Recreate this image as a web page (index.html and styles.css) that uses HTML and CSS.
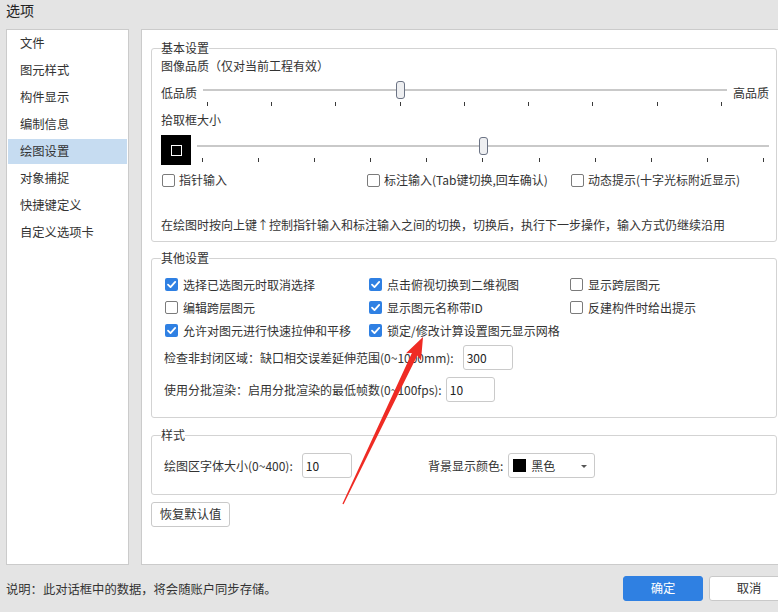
FILE: index.html
```html
<!DOCTYPE html>
<html lang="zh-CN">
<head>
<meta charset="utf-8">
<title>选项</title>
<link rel="stylesheet" href="styles.css">
</head>
<body>
<div class="dialog">
  <div class="titlebar">选项</div>
  <div class="main">
    <div class="nav">
      <div class="nav-item">文件</div>
      <div class="nav-item">图元样式</div>
      <div class="nav-item">构件显示</div>
      <div class="nav-item">编制信息</div>
      <div class="nav-item active">绘图设置</div>
      <div class="nav-item">对象捕捉</div>
      <div class="nav-item">快捷键定义</div>
      <div class="nav-item">自定义选项卡</div>
    </div>
    <div class="content">
      <fieldset class="group g-basic">
        <legend>基本设置</legend>
        <div class="line">图像品质（仅对当前工程有效）</div>
        <div class="slider-row">
          <span class="slabel">低品质</span>
          <div class="slider q">
            <div class="track"></div>
            <div class="ticks"><i></i><i></i><i></i><i></i><i></i><i></i><i></i><i></i><i></i></div>
            <div class="rail"><div class="thumb" style="left:37.5%"></div></div>
          </div>
          <span class="slabel high">高品质</span>
        </div>
        <div class="line pick-title">拾取框大小</div>
        <div class="picker-row">
          <div class="swatch-box"><span class="inner"></span></div>
          <div class="slider p">
            <div class="track"></div>
            <div class="ticks"><i></i><i></i><i></i><i></i><i></i><i></i><i></i><i></i><i></i><i></i><i></i></div>
            <div class="rail"><div class="thumb" style="left:50%"></div></div>
          </div>
        </div>
        <div class="check-row">
          <label class="chk"><span class="box"></span>指针输入</label>
          <label class="chk"><span class="box"></span>标注输入(Tab键切换,回车确认)</label>
          <label class="chk"><span class="box"></span>动态提示(十字光标附近显示)</label>
        </div>
        <div class="desc">在绘图时按向上键↑控制指针输入和标注输入之间的切换，切换后，执行下一步操作，输入方式仍继续沿用</div>
      </fieldset>

      <fieldset class="group g-other">
        <legend>其他设置</legend>
        <div class="opt-grid">
          <label class="chk"><span class="box on"><svg viewBox="0 0 13 13"><path d="M3 6.6 L5.5 9.1 L10.2 3.9"/></svg></span>选择已选图元时取消选择</label>
          <label class="chk"><span class="box on"><svg viewBox="0 0 13 13"><path d="M3 6.6 L5.5 9.1 L10.2 3.9"/></svg></span>点击俯视切换到二维视图</label>
          <label class="chk"><span class="box"></span>显示跨层图元</label>
          <label class="chk"><span class="box"></span>编辑跨层图元</label>
          <label class="chk"><span class="box on"><svg viewBox="0 0 13 13"><path d="M3 6.6 L5.5 9.1 L10.2 3.9"/></svg></span>显示图元名称带ID</label>
          <label class="chk"><span class="box"></span>反建构件时给出提示</label>
          <label class="chk"><span class="box on"><svg viewBox="0 0 13 13"><path d="M3 6.6 L5.5 9.1 L10.2 3.9"/></svg></span>允许对图元进行快速拉伸和平移</label>
          <label class="chk"><span class="box on"><svg viewBox="0 0 13 13"><path d="M3 6.6 L5.5 9.1 L10.2 3.9"/></svg></span>锁定/修改计算设置图元显示网格</label>
          <span></span>
        </div>
        <div class="field-row r1">
          <span>检查非封闭区域：缺口相交误差延伸范围(0~1000mm):</span>
          <span class="input w50">300</span>
        </div>
        <div class="field-row r2">
          <span>使用分批渲染：启用分批渲染的最低帧数(0~100fps):</span>
          <span class="input w49">10</span>
        </div>
      </fieldset>

      <fieldset class="group g-style">
        <legend>样式</legend>
        <div class="style-row">
          <div class="style-col first">
            <span>绘图区字体大小(0~400):</span>
            <span class="input w50">10</span>
          </div>
          <div class="style-col">
            <span>背景显示颜色:</span>
            <span class="select"><span class="sw"></span><span class="sel-text">黑色</span><span class="caret"></span></span>
          </div>
        </div>
      </fieldset>

      <button class="btn reset">恢复默认值</button>
    </div>
  </div>
  <div class="footer">
    <span class="note">说明：此对话框中的数据，将会随账户同步存储。</span>
    <div class="actions">
      <button class="btn primary">确定</button>
      <button class="btn cancel">取消</button>
    </div>
  </div>
</div>
<svg class="annotation" width="778" height="612" viewBox="0 0 778 612">
  <polygon points="423,337 421,360.5 417.3,355.6 343.6,504.3 342.4,503.7 411.9,353 406,353.3" fill="#ef2b24"/>
</svg>
</body>
</html>
```

FILE: styles.css
```css
html, body {
  margin: 0;
  padding: 0;
}
body {
  position: relative;
  width: 778px;
  height: 612px;
  overflow: hidden;
  background: #e4e4e4;
  font-family: "Noto Sans CJK SC", "Noto Sans", sans-serif;
  font-size: 12px;
  color: #333;
}
.dialog {
  width: 790px;
}
.titlebar {
  height: 29px;
  padding-left: 6px;
  font-size: 14px;
  line-height: 20px;
  color: #222;
}
.main {
  display: flex;
  gap: 12px;
  height: 536px;
  padding-left: 6px;
}
.nav {
  width: 123px;
  box-sizing: border-box;
  border: 1px solid #cbcbcb;
  background: #fff;
  padding-top: 1px;
}
.nav-item {
  height: 25px;
  line-height: 25px;
  margin: 0 1px 2px;
  padding-left: 12px;
  font-size: 12.3px;
}
.nav-item.active {
  background: #c6dcf1;
}
.content {
  width: 646px;
  box-sizing: border-box;
  border: 1px solid #cbcbcb;
  background: #fff;
  padding: 9px 9px 0 9px;
}
.group {
  margin: 0;
  border: 1px solid #d3d3d3;
  border-radius: 3px;
  padding: 0 7px 7px 9px;
  min-width: 0;
}
.group legend {
  padding: 0;
  line-height: 18px;
}
.line {
  height: 18px;
  line-height: 18px;
}
.slider-row {
  display: flex;
  align-items: flex-start;
  height: 34px;
}
.slabel {
  margin-top: 9px;
  line-height: 18px;
}
.slider {
  position: relative;
  flex: 1;
}
.slider.q {
  height: 34px;
  margin: 0 6px 0 6px;
}
.track {
  position: absolute;
  left: 0;
  right: 0;
  height: 2px;
  background: #c9c9c9;
}
.ticks {
  position: absolute;
  display: flex;
  justify-content: space-between;
  height: 4px;
}
.ticks i {
  width: 1px;
  height: 4px;
  background: #3a3a3a;
}
.rail {
  position: absolute;
  height: 18px;
}
.thumb {
  position: absolute;
  top: 0;
  width: 9px;
  height: 18px;
  margin-left: -4px;
  box-sizing: border-box;
  border: 1px solid #6b7384;
  border-radius: 3px;
  background: #eeeff1;
}
.slider.q .track { top: 14px; }
.slider.q .ticks { top: 27px; left: 4px; right: 5px; }
.slider.q .rail { top: 6px; left: 4px; right: 5px; }

.pick-title {
  margin-top: 2px;
}
.picker-row {
  display: flex;
  height: 30px;
  margin-top: 6px;
}
.swatch-box {
  width: 30px;
  height: 30px;
  background: #000;
  display: flex;
  align-items: center;
  justify-content: center;
}
.swatch-box .inner {
  width: 11px;
  height: 11px;
  box-sizing: border-box;
  border: 1.5px solid #fff;
}
.slider.p {
  height: 30px;
  margin-left: 6px;
}
.slider.p .track { top: 10px; }
.slider.p .ticks { top: 23px; left: 5px; right: 5px; }
.slider.p .rail { top: 2px; left: 5px; right: 5px; }

.check-row {
  display: grid;
  grid-template-columns: 205px 204px auto;
  margin-top: 6px;
  padding-left: 1px;
  height: 18px;
}
.chk {
  display: flex;
  align-items: center;
  gap: 4px;
  line-height: 18px;
  white-space: nowrap;
}
.box {
  width: 13px;
  height: 13px;
  box-sizing: border-box;
  border: 1px solid #7b7b7b;
  border-radius: 2px;
  background: #fff;
  flex: none;
}
.box.on {
  border: none;
  background: #2f80e3;
}
.box svg {
  display: block;
  width: 13px;
  height: 13px;
}
.box svg path {
  fill: none;
  stroke: #fff;
  stroke-width: 1.8;
  stroke-linecap: round;
  stroke-linejoin: round;
}
.desc {
  margin-top: 27px;
  line-height: 18px;
  white-space: nowrap;
}

.g-other {
  margin-top: 7px;
  padding-bottom: 15px;
}
.opt-grid {
  display: grid;
  grid-template-columns: 204px 201px auto;
  grid-auto-rows: 23px;
  margin-top: 6px;
  padding-left: 4px;
}
.opt-grid .chk {
  gap: 5px;
}
.field-row {
  display: flex;
  align-items: center;
  gap: 4px;
  height: 25px;
  padding-left: 3px;
  white-space: nowrap;
}
.field-row.r1 { margin-top: 3px; gap: 9px; }
.field-row.r2 { margin-top: 7px; }
.input {
  height: 25px;
  box-sizing: border-box;
  border: 1px solid #cacaca;
  border-radius: 3px;
  padding-left: 3px;
  line-height: 23px;
  background: #fff;
  color: #222;
}
.w50 { width: 50px; }
.w49 { width: 49px; }

.g-style {
  margin-top: 8px;
  padding-bottom: 16px;
}
.style-row {
  display: flex;
  margin-top: 9px;
  padding-left: 3px;
  height: 25px;
}
.style-col {
  display: flex;
  align-items: center;
  gap: 5px;
  white-space: nowrap;
}
.style-col.first {
  width: 264px;
  gap: 9px;
}
.select {
  position: relative;
  display: flex;
  align-items: center;
  width: 87px;
  height: 25px;
  box-sizing: border-box;
  border: 1px solid #cacaca;
  border-radius: 3px;
  padding-left: 4px;
  gap: 5px;
}
.sw {
  width: 13px;
  height: 13px;
  background: #000;
}
.caret {
  position: absolute;
  right: 7px;
  top: 11px;
  width: 0;
  height: 0;
  border-left: 3px solid transparent;
  border-right: 3px solid transparent;
  border-top: 3px solid #555;
}

.btn {
  font-family: inherit;
  font-size: 12.3px;
  color: #333;
  height: 25px;
  box-sizing: border-box;
  border: 1px solid #c9c9c9;
  border-radius: 3px;
  background: #fff;
  padding: 0;
  line-height: 23px;
}
.reset {
  display: block;
  width: 79px;
  margin-top: 7px;
}
.footer {
  display: flex;
  justify-content: space-between;
  align-items: center;
  height: 47px;
  padding: 0 1px 0 6px;
}
.note {
  line-height: 18px;
  font-size: 12.3px;
}
.actions {
  display: flex;
  gap: 6px;
}
.actions .btn {
  width: 80px;
}
.primary {
  background: #2f80e2;
  border-color: #2f80e2;
  color: #fff;
}
.annotation {
  position: absolute;
  left: 0;
  top: 0;
  pointer-events: none;
}
```
